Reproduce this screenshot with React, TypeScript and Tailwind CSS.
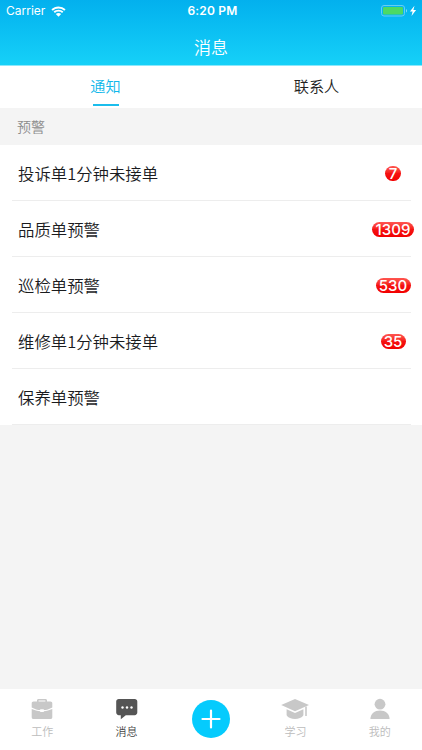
import type { ReactNode } from "react";

type Alert = { title: string; count?: number; badge?: string };

const alerts: Alert[] = [
  { title: "投诉单1分钟未接单", count: 7, badge: "w-[16px]" },
  { title: "品质单预警", count: 1309, badge: "w-[42px]" },
  { title: "巡检单预警", count: 530, badge: "w-[35px]" },
  { title: "维修单1分钟未接单", count: 35, badge: "w-[25px]" },
  { title: "保养单预警" },
];

function StatusBar() {
  return (
    <div className="grid h-[22px] grid-cols-3 items-center pl-[6px] pr-[5px] font-['Inter','Liberation_Sans',sans-serif] text-[12px] leading-[22px]">
      <div className="flex items-center gap-[6px]">
        <span className="w-[39px] whitespace-nowrap text-[12px] font-normal">Carrier</span>
        <svg className="h-[11px] w-[15px]" viewBox="0 0 15 11" fill="currentColor">
          <path d="M7.5 0.4C4.8.4 2.3 1.5.4 3.3l1.3 1.4a8.5 8.5 0 0 1 11.6 0l1.3-1.4A10.3 10.3 0 0 0 7.5.4Z" />
          <path d="M7.5 3.7c-1.9 0-3.6.7-4.9 1.9l1.3 1.4a5.3 5.3 0 0 1 7.2 0l1.3-1.4a7.2 7.2 0 0 0-4.9-1.9Z" />
          <path d="M7.5 7c-1 0-2 .4-2.7 1l2.7 2.7L10.2 8c-.7-.6-1.7-1-2.7-1Z" />
        </svg>
      </div>
      <span className="pl-[2px] text-center text-[12px] font-semibold tracking-[0.2px]">6:20 PM</span>
      <div className="flex items-center justify-end">
        <svg className="h-[12px] w-[36px]" viewBox="0 0 36 12">
          <rect x="0.5" y="0.5" width="23" height="10.5" rx="2.5" fill="none" stroke="#66cdf5" />
          <rect x="2" y="2" width="20" height="7.5" rx="1.2" fill="#4cd964" />
          <path d="M25 4v3.5c.7-.3 1.1-1 1.1-1.8S25.700 4.300 25 4Z" fill="#7ddbf8" />
          <path d="M33.500.700 28.900 6.500h2.700l-1.100 4.500 4.600-5.900h-2.700Z" fill="white" />
        </svg>
      </div>
    </div>
  );
}

function AlertRow({ title, count, badge }: Alert) {
  return (
    <li className="flex h-[56px] pl-[12px] pr-[11px]">
      <div className="flex flex-1 items-center justify-between border-b border-[#ededed] pl-[6px]">
        <span className="pt-px text-[16.4px] font-[350] text-[#1a1b1e]">{title}</span>
        {count !== undefined && (
          <span className="-mr-[3px] flex w-[42px] justify-center pt-px">
            <span
              className={`flex h-[15px] items-center justify-center rounded-full bg-linear-to-b from-[#ff5550] from-0% via-[#f51212] via-50% to-[#f20000] pt-px font-['Inter','Liberation_Sans',sans-serif] text-[15px] font-medium leading-[15px] text-white ${badge}`}
            >
              {count}
            </span>
          </span>
        )}
      </div>
    </li>
  );
}

function NavItem({ label, active, children }: { label: string; active?: boolean; children: ReactNode }) {
  return (
    <div className={`flex flex-1 flex-col items-center ${active ? "text-[#555555]" : "text-[#c8c8c8]"}`}>
      <svg className="mt-[8px] h-[24px] w-[30px]" viewBox="0 0 30 24" fill="currentColor">
        {children}
      </svg>
      <span className={`mt-[2px] text-[11px] font-[350] leading-[16px] ${active ? "text-[#444444]" : "text-[#bcbcbc]"}`}>
        {label}
      </span>
    </div>
  );
}

export default function App() {
  return (
    <div className="flex h-[750px] w-[422px] flex-col overflow-hidden bg-[#f4f4f4] font-['Noto_Sans_CJK_SC',sans-serif]">
      <header className="h-[66px] shrink-0 border-b border-[#8ce8fb] bg-linear-to-b from-[#03b0ee] to-[#16d1f8] text-white">
        <StatusBar />
        <h1 className="mt-[12px] text-center text-[17px] font-[350] leading-[26px]">消息</h1>
      </header>

      <div className="flex h-[42px] shrink-0 bg-white text-[15.2px] font-[350] leading-[39px]">
        <div className="flex flex-1 flex-col items-center text-[#10b8ea]">
          <span className="h-[38px]">通知</span>
          <span className="h-[2px] w-[26px] bg-[#1bbdec]" />
        </div>
        <div className="flex-1 text-center text-[#222222]">联系人</div>
      </div>

      <h2 className="h-[37px] shrink-0 pl-[17px] text-[14px] font-[350] leading-[37px] text-[#8c8c8c]">预警</h2>

      <ul className="bg-white">
        {alerts.map((alert) => (
          <AlertRow key={alert.title} {...alert} />
        ))}
      </ul>

      <nav className="mt-auto flex h-[61px] shrink-0 bg-white">
        <NavItem label="工作">
          <path
            fillRule="evenodd"
            d="M10 4.500V3.600C10 2.700 10.600 2 11.500 2h7c.9 0 1.500.7 1.500 1.600v.9h3.500c1 0 1.800.8 1.800 1.800v4.100c-3 1.700-6 2.500-8.500 2.600v-.7h-3.600v.7c-2.500-.1-5.500-.9-8.500-2.600V6.300c0-1 .8-1.800 1.800-1.800Zm1.600 0h6.800v-.9h-6.800Z"
          />
          <path d="M4.700 12c2.900 1.300 5.700 2 8.500 2.200v.9h3.600v-.9c2.800-.2 5.600-.9 8.500-2.200v8.200c0 1-.8 1.800-1.800 1.800h-17c-1 0-1.800-.8-1.800-1.800Z" />
        </NavItem>
        <NavItem label="消息" active>
          <path d="M6.800 2h15.900c1.500 0 2.600 1.100 2.600 2.600v11c0 1.500-1.100 2.600-2.600 2.600h-8.900l-5 4.100v-4.100h-2c-1.500 0-2.600-1.100-2.600-2.600v-11C4.200 3.100 5.300 2 6.800 2Z" />
          <circle cx="10.500" cy="10.500" r="1.200" fill="white" />
          <circle cx="15" cy="10.500" r="1.200" fill="white" />
          <circle cx="19.500" cy="10.500" r="1.200" fill="white" />
        </NavItem>
        <div className="flex flex-1 justify-center">
          <svg className="mt-[11px] size-[38px]" viewBox="0 0 38 38">
            <circle cx="19" cy="19" r="19" fill="#05cbfd" />
            <path d="M19 10.500v17M10.500 19h17" stroke="white" strokeWidth="2.200" strokeLinecap="round" />
          </svg>
        </div>
        <NavItem label="学习">
          <path d="M15 2 29 8 15 14.200 1.200 8Z" />
          <path d="m6.600 12.300 8.400 3.800 8.400-3.800v5.900C22 20.700 18.500 22 15 22s-7-1.300-8.400-3.800Z" />
          <path d="M25.200 9.500h1.600V19h-1.600Z" />
        </NavItem>
        <NavItem label="我的">
          <circle cx="15" cy="7.200" r="5.400" />
          <path d="M5.400 22c0-5.500 4.300-8.600 9.600-8.600s9.600 3.100 9.600 8.600Z" />
        </NavItem>
      </nav>
    </div>
  );
}
